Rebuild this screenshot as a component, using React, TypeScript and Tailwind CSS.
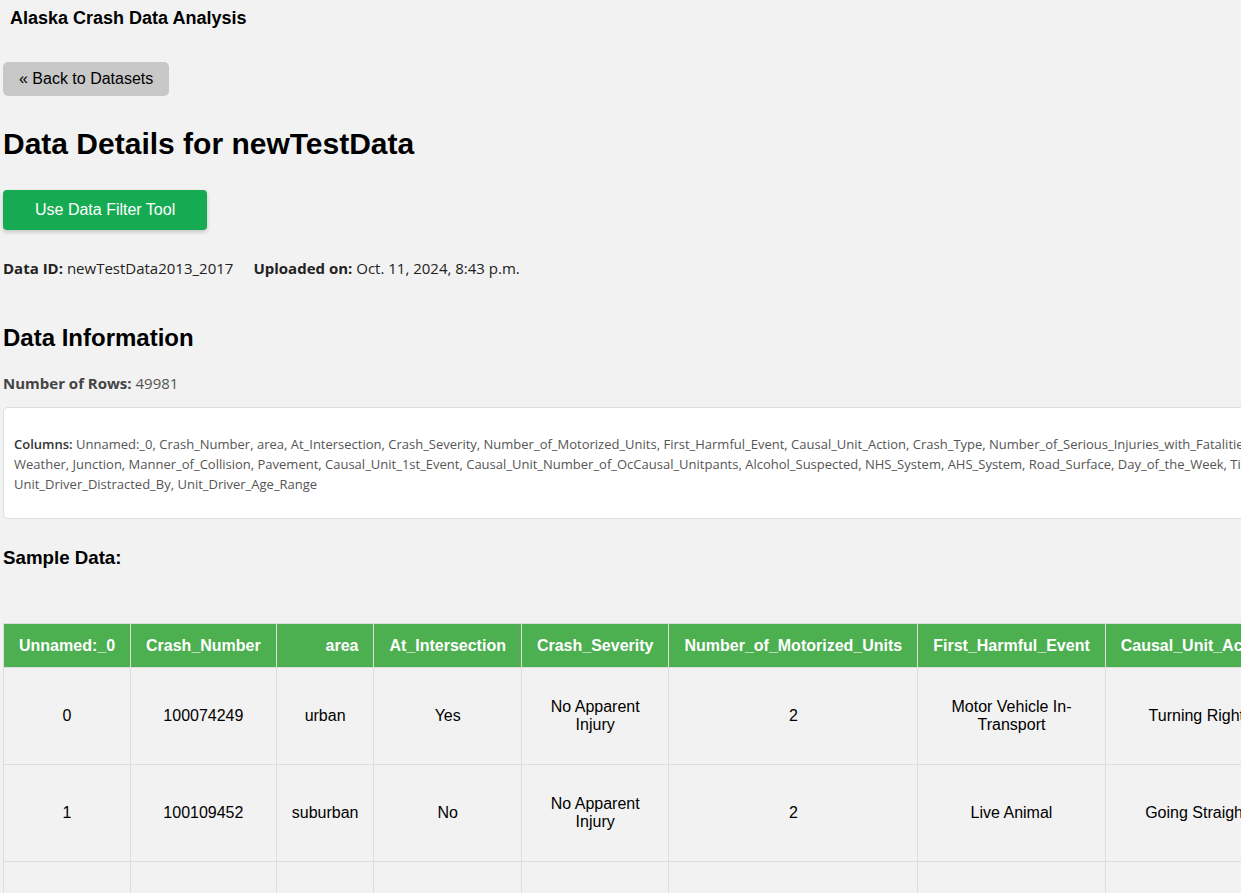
import React from 'react';

const COLUMNS_LINES = [
  'Unnamed:_0, Crash_Number, area, At_Intersection, Crash_Severity, Number_of_Motorized_Units, First_Harmful_Event, Causal_Unit_Action, Crash_Type, Number_of_Serious_Injuries_with_Fatalities, Light_Condition,',
  'Weather, Junction, Manner_of_Collision, Pavement, Causal_Unit_1st_Event, Causal_Unit_Number_of_OcCausal_Unitpants, Alcohol_Suspected, NHS_System, AHS_System, Road_Surface, Day_of_the_Week, Time_of_Day,',
  'Unit_Driver_Distracted_By, Unit_Driver_Age_Range',
];

const HEADERS = [
  'Unnamed:_0',
  'Crash_Number',
  'area',
  'At_Intersection',
  'Crash_Severity',
  'Number_of_Motorized_Units',
  'First_Harmful_Event',
  'Causal_Unit_Action',
  'Crash_Type',
  'Number_of_Serious_Injuries_with_Fatalities',
  'Light_Condition',
];

const ROWS: string[][] = [
  ['0', '100074249', 'urban', 'Yes', 'No Apparent Injury', '2', 'Motor Vehicle In-Transport', 'Turning Right', 'Angle', '0', 'Daylight'],
  ['1', '100109452', 'suburban', 'No', 'No Apparent Injury', '2', 'Live Animal', 'Going Straight', 'Rear End', '0', 'Dark - Lighted'],
  ['2', '100113877', 'urban', 'No', 'Possible Injury', '2', 'Motor Vehicle In-Transport', 'Going Straight', 'Rear End', '0', 'Daylight'],
];

export default function App() {
  return (
    <div className="h-screen w-full overflow-hidden bg-[#f2f2f2] text-black font-['Liberation_Sans',Arial,sans-serif]">
      <div className="w-[2400px]">
        <header className="px-[10px] pt-[8px]">
          <div className="text-[18px] font-bold leading-[21px]">Alaska Crash Data Analysis</div>
        </header>

        <main className="px-[3px]">
          <div className="mt-[33px]">
            <button className="rounded-[5px] bg-[#c8c8c8] px-4 h-[34px] text-[16px] leading-[18px]">
              « Back to Datasets
            </button>
          </div>

          <h1 className="mt-[30px] text-[30px] font-bold leading-[35px]">Data Details for newTestData</h1>

          <div className="mt-[29px]">
            <button className="h-10 rounded-[4px] bg-[#16ab53] px-8 text-[16px] text-white shadow-[0_2px_4px_rgba(0,0,0,0.2)]">
              Use Data Filter Tool
            </button>
          </div>

          <p className="mt-[28px] text-[15px] leading-[20px] text-[#222] font-['Open_Sans',sans-serif]">
            <span className="font-bold">Data ID:</span> newTestData2013_2017
            <span className="ml-[20px] font-bold">Uploaded on:</span> Oct. 11, 2024, 8:43 p.m.
          </p>

          <h2 className="mt-[46px] text-[24px] font-bold leading-[28px]">Data Information</h2>

          <p className="mt-[21px] text-[15px] leading-[20px] text-[#555] font-['Open_Sans',sans-serif]">
            <span className="font-bold text-[#444]">Number of Rows:</span> 49981
          </p>

          <div className="mt-[14px] w-[2300px] rounded-[5px] border border-[#dddddd] bg-white px-[10px] pt-[26px] pb-[24px]">
            <p className="whitespace-nowrap text-[13px] leading-[20px] text-[#555] font-['Open_Sans',sans-serif]">
              <span className="font-semibold text-[#333]">Columns:</span> {COLUMNS_LINES[0]}
              <br />
              {COLUMNS_LINES[1]}
              <br />
              {COLUMNS_LINES[2]}
            </p>
          </div>

          <h3 className="mt-[28px] text-[18.72px] font-bold leading-[22px]">Sample Data:</h3>

          <table className="mt-[54px] w-min border-collapse text-[16px]">
            <thead>
              <tr className="bg-[#4caf50] text-right text-white">
                {HEADERS.map((h) => (
                  <th key={h} className="border border-[#dddddd] px-[15px] py-[12px] font-bold leading-[19px]">
                    {h}
                  </th>
                ))}
              </tr>
            </thead>
            <tbody>
              {ROWS.map((row, i) => (
                <tr key={i} className="h-[97px]">
                  {row.map((cell, j) => (
                    <td key={j} className="border border-[#dddddd] px-[15px] py-[12px] text-center leading-[18px]">
                      {cell}
                    </td>
                  ))}
                </tr>
              ))}
            </tbody>
          </table>
        </main>
      </div>
    </div>
  );
}
